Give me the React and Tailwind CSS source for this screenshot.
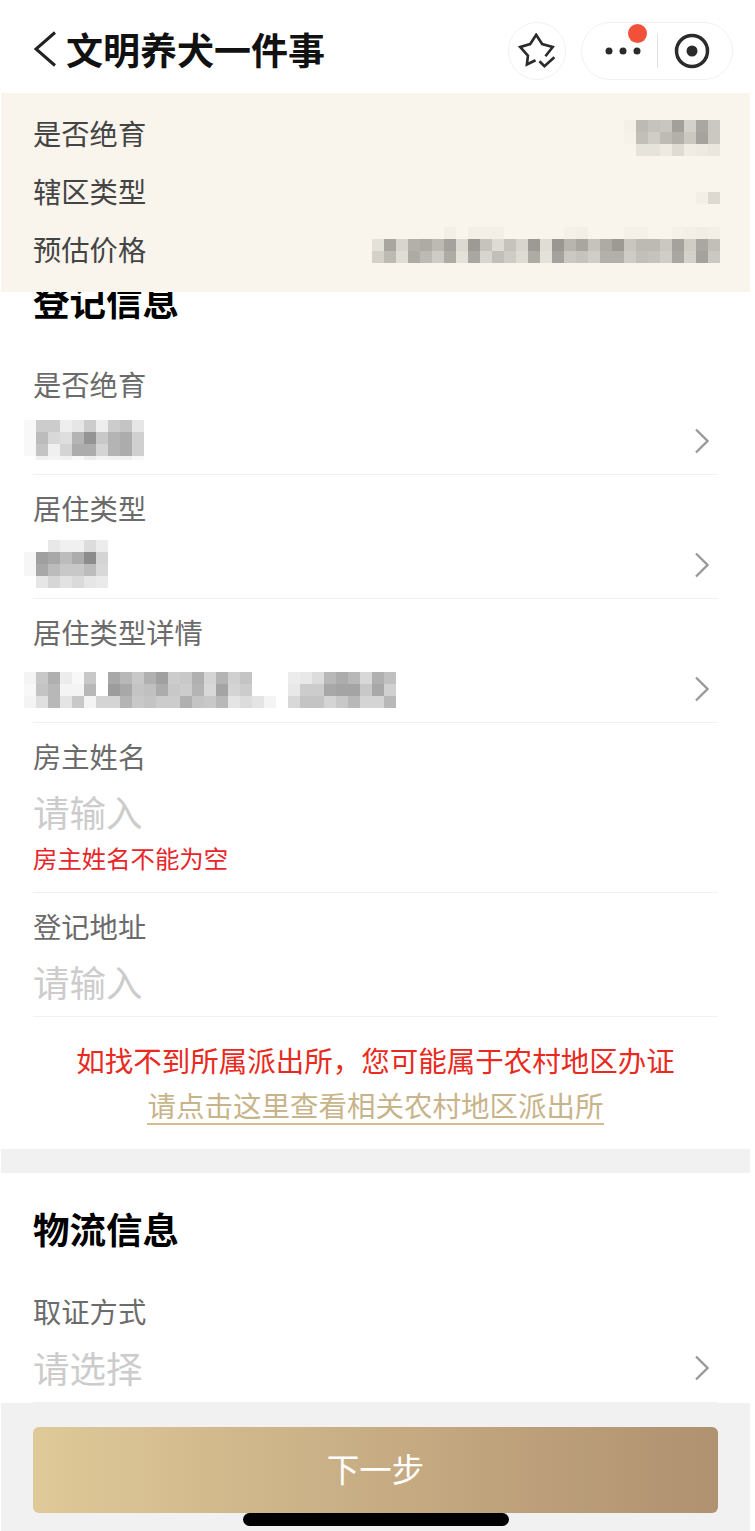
const MOSAIC_SMALL = [
  ['f4f0e8', 'bdbab4', 'c6c3bc', 'c9c6bf', 'a3a09b', 'd4d1ca', 'aaa7a2', 'cbc8c2'],
  ['f6f2ea', 'c2bfb9', 'd0cdc6', 'bebbb5', 'b3b0aa', 'cbc8c1', 'a6a39e', 'cbc8c1'],
  [null, 'e6e3db', 'e6e3db', 'eeeae2', 'dedbd3', 'f0ece4', 'eeeae2', 'eae6de'],
];
const MOSAIC_DISTRICT = [[null, 'f3efe7', 'dcd9d2']];
const MOSAIC_PRICE = [
  [null, null, null, null, null, null, 'f3efe7', null, 'f3efe7', 'f3efe7', 'f3efe7', null, null, null, null, null, 'f5f1e9', 'f3efe7', null, null, null, 'f5f1e9', 'f5f1e9', null, null, 'f5f1e9', 'f3efe7', 'f1ede5', 'f3efe7'],
  ['e4e1d9', 'a9a6a1', 'd8d5ce', 'b3b0aa', 'aeaba5', 'bdbab4', 'a5a29d', 'dcd9d2', '9d9a95', 'c6c3bc', 'dedbd3', 'c6c3bc', 'd8d5ce', '9d9a95', 'e0ddd5', '9a9792', 'b8b5af', 'a9a6a1', 'c6c3bc', 'aeaba5', '9d9a95', 'c9c6bf', 'bdbab4', 'bdbab4', 'cbc8c2', 'a5a29d', 'd0cdc6', 'aaa7a2', 'c2bfb9'],
  ['d4d1ca', 'bdbab4', 'e0ddd5', 'aeaba5', 'bdbab4', 'cfccc5', 'aeaba5', 'e4e1d9', 'aaa7a2', 'd8d5ce', 'c2bfb9', 'cfccc5', 'dedbd3', 'aeaba5', 'e4e1d9', 'a5a29d', 'cbc8c2', 'c6c3bc', 'd0cdc6', 'b3b0aa', 'b3b0aa', 'cfccc5', 'c2bfb9', 'c6c3bc', 'd0cdc6', 'aaa7a2', 'd4d1ca', 'a5a29d', 'cbc8c2'],
];
const MOSAIC_STERILE = [
  ['f8f8f8', 'cccccc', 'cccccc', 'eeeeee', 'e6e6e6', 'cccccc', 'eeeeee', 'cccccc', 'c4c4c4', 'e6e6e6'],
  ['f8f8f8', 'bcbcbc', 'd8d8d8', 'dedede', 'b4b4b4', '949494', 'c8c8c8', 'b4b4b4', 'acacac', 'd0d0d0'],
  ['f8f8f8', 'c4c4c4', 'f0f0f0', 'd4d4d4', 'acacac', 'acacac', 'd4d4d4', 'b4b4b4', 'acacac', 'd0d0d0'],
  [null, 'f0f0f0', 'f4f4f4', 'f0f0f0', 'f8f8f8', 'ececec', 'f4f4f4', 'f0f0f0', 'f0f0f0', 'f8f8f8'],
];
const MOSAIC_HOUSING = [
  [null, null, 'e8e8e8', 'f0f0f0', 'f0f0f0', 'dcdcdc', 'ececec'],
  ['f6f6f6', 'a0a0a0', 'a8a8a8', 'bcbcbc', 'acacac', '8c8c8c', 'd4d4d4'],
  ['f6f6f6', 'a8a8a8', 'bcbcbc', 'c8c8c8', 'c8c8c8', 'bcbcbc', 'd8d8d8'],
  [null, 'e6e6e6', 'd6d6d6', 'e2e2e2', 'dadada', 'e6e6e6', 'eaeaea'],
];
const MOSAIC_DETAIL = [
  ['f4f4f4', 'c8c8c8', 'b0b0b0', 'ececec', 'f8f8f8', 'c8c8c8', null, 'a8a8a8', 'b8b8b8', 'c8c8c8', 'b0b0b0', 'a0a0a0', 'cccccc', 'c8c8c8', 'b0b0b0', 'd4d4d4', 'b4b4b4', 'd0d0d0', 'c4c4c4', null, null, null, 'ececec', 'e8e8e8', 'dcdcdc', 'b8b8b8', 'acacac', 'b8b8b8', 'd8d8d8', 'b0b0b0', 'c0c0c0'],
  ['f8f8f8', 'c4c4c4', 'b8b8b8', 'f4f4f4', 'f4f4f4', 'b8b8b8', null, '9c9c9c', 'a8a8a8', 'c4c4c4', 'c0c0c0', 'acacac', 'c8c8c8', 'cccccc', 'b4b4b4', 'd8d8d8', 'a4a4a4', 'd4d4d4', 'cccccc', null, null, null, 'e8e8e8', 'cccccc', 'cccccc', 'a8a8a8', 'a4a4a4', 'a4a4a4', 'c8c8c8', 'a8a8a8', 'd0d0d0'],
  ['f4f4f4', 'e0e0e0', 'b8b8b8', 'e4e4e4', 'c8c8c8', 'f4f4f4', 'd4d4d4', 'd4d4d4', 'b4b4b4', 'c8c8c8', 'c4c4c4', 'cccccc', 'cccccc', 'b0b0b0', 'c4c4c4', 'c8c8c8', 'b8b8b8', 'e4e4e4', 'dcdcdc', 'e4e4e4', 'f4f4f4', null, 'd8d8d8', 'c4c4c4', 'c4c4c4', 'd4d4d4', 'c8c8c8', 'b8b8b8', 'd4d4d4', 'd4d4d4', 'b8b8b8'],
];

// blurred-out values in the screenshot
function Mosaic({ rows, height, className = '' }) {
  const cols = rows[0].length;
  return (
    <svg width={cols * 12} height={height || rows.length * 12} className={`block shrink-0 ${className}`}>
      {rows.map((row, y) =>
        row.map((c, x) =>
          c ? <rect key={`${x}-${y}`} x={x * 12} y={y * 12} width="12" height="12" fill={`#${c}`} /> : null
        )
      )}
    </svg>
  );
}

function Chevron() {
  return (
    <svg width="14" height="26" viewBox="0 0 14 26" fill="none" className="shrink-0">
      <path d="M1 1.5 L12.5 13 L1 24.5" stroke="#9a9a9a" strokeWidth="2.4" />
    </svg>
  );
}

function Divider() {
  return <div className="h-px bg-[#f1f1f3]"></div>;
}

function SelectField({ label, children }) {
  return (
    <div className="ml-[33px] mr-[37px]">
      <div className="pt-[13px] text-[28.3px] leading-[40px] text-[#6b6b6b]">{label}</div>
      <div className="mb-[5px] mt-[9px] flex h-[56px] items-center justify-between pr-[9px]">
        {children}
        <Chevron />
      </div>
      <Divider />
    </div>
  );
}

function InputField({ label, error }) {
  return (
    <div className="ml-[33px] mr-[37px]">
      <div className="pt-[13px] text-[28.3px] leading-[40px] text-[#6b6b6b]">{label}</div>
      <div className="mt-[7px] text-[36.5px] leading-[58px] text-[#cccccc]">请输入</div>
      {error && <div className="text-[24.4px] leading-[34px] text-[#e8262a]">{error}</div>}
      <div className={error ? 'mt-[17px]' : 'mt-[5px]'}>
        <Divider />
      </div>
    </div>
  );
}

function Summary({ label, rows, className }) {
  return (
    <div className="flex h-[58px] items-center justify-between">
      <span className="text-[28.3px] leading-[40px] text-[#444444]">{label}</span>
      <Mosaic rows={rows} className={className} />
    </div>
  );
}

export default function App() {
  return (
    <div className="flex h-[1531px] flex-col overflow-hidden bg-white font-['Noto_Sans_CJK_SC',sans-serif]">
      <header className="relative z-10 flex h-[93px] shrink-0 items-center justify-between bg-white pl-[33px] pr-[22px] pt-[8px]">
        <div className="-mt-[4px] flex items-center">
          <svg width="24" height="36" viewBox="0 0 24 36" fill="none" className="mr-[9px]">
            <path d="M22 1.5 L3 18 L22 34.5" stroke="#222222" strokeWidth="3" />
          </svg>
          <h1 className="text-[37px] font-bold leading-[50px] text-[#111111]">文明养犬一件事</h1>
        </div>
        <div className="flex items-center gap-[15px]">
          <div className="flex h-[58px] w-[58px] items-center justify-center rounded-full border border-[#f1f1f1]">
            <svg width="38" height="35" viewBox="85 70 115 105" fill="none" stroke="#2b2b2b" strokeWidth="8">
              <path d="M168 140 L190 112 L158 103 L140 75 L122 103 L92 112 L115 138 L112 165 L138 152" />
              <path d="M150 155 L165 170 L195 143" />
            </svg>
          </div>
          <div className="relative flex h-[58px] w-[152px] items-center rounded-full border border-[#f1f1f1]">
            <div className="flex w-[75px] justify-center pl-[7px]">
              <svg width="36" height="8" viewBox="0 0 36 8" fill="#2b2b2b">
                <circle cx="4" cy="4" r="3.5" />
                <circle cx="18" cy="4" r="3.5" />
                <circle cx="32" cy="4" r="3.5" />
              </svg>
            </div>
            <div className="h-[34px] w-px bg-[#e2e2e2]"></div>
            <div className="flex flex-1 justify-center pr-[7px]">
              <svg width="36" height="36" viewBox="0 0 36 36" fill="none">
                <circle cx="18" cy="18" r="15.5" stroke="#2b2b2b" strokeWidth="3.5" />
                <circle cx="18" cy="18" r="5.5" fill="#2b2b2b" />
              </svg>
            </div>
            <span className="absolute left-[46px] top-[1px] h-[19px] w-[19px] rounded-full bg-[#f05138]"></span>
          </div>
        </div>
      </header>

      <section className="relative z-10 ml-px h-[199px] w-[749px] shrink-0 bg-[#f9f5ed] pl-[32px] pr-[30px] pt-[11px]">
        <Summary label="是否绝育" rows={MOSAIC_SMALL} className="mt-[10px]" />
        <Summary label="辖区类型" rows={MOSAIC_DISTRICT} className="mt-[14px]" />
        <Summary label="预估价格" rows={MOSAIC_PRICE} className="mt-[-8px]" />
      </section>

      <main className="-mt-[16px] flex-1 overflow-hidden">
        <h2 className="mx-[33px] mb-[25px] text-[36.5px] font-bold leading-[50px] text-black">登记信息</h2>
        <SelectField label="是否绝育">
          <Mosaic rows={MOSAIC_STERILE} height={40} className="-ml-[9px] mt-[-2px]" />
        </SelectField>
        <SelectField label="居住类型">
          <Mosaic rows={MOSAIC_HOUSING} className="-ml-[9px] mt-[-2px]" />
        </SelectField>
        <SelectField label="居住类型详情">
          <Mosaic rows={MOSAIC_DETAIL} className="-ml-[9px] mt-[2px]" />
        </SelectField>
        <InputField label="房主姓名" error="房主姓名不能为空" />
        <InputField label="登记地址" />

        <div className="w-[751px] pb-[24px] pt-[20px] text-center text-[28.5px] leading-[46px]">
          <div className="text-[#e92a20]">如找不到所属派出所，您可能属于农村地区办证</div>
          <div className="-mt-px flex justify-center">
            <span className="h-[43px] border-b-2 border-[#d2bd8f] text-[#c8b48a]">请点击这里查看相关农村地区派出所</span>
          </div>
        </div>

        <div className="ml-px h-[24px] w-[749px] bg-[#f1f1f1]"></div>

        <h2 className="mx-[33px] mb-[24px] mt-[31px] text-[36.5px] font-bold leading-[50px] text-black">物流信息</h2>
        <div className="ml-[33px] mr-[37px]">
          <div className="pt-[13px] text-[28.3px] leading-[40px] text-[#6b6b6b]">取证方式</div>
          <div className="mb-[6px] mt-[9px] flex h-[56px] items-center justify-between pr-[9px]">
            <span className="text-[36.5px] leading-[50px] text-[#cccccc]">请选择</span>
            <Chevron />
          </div>
          <Divider />
        </div>
      </main>

      <footer className="relative ml-px h-[128px] w-[749px] shrink-0 bg-[#f1f1f1] pl-[32px] pr-[32px] pt-[24px]">
        <button className="flex h-[86px] w-full items-center justify-center rounded-[6px] bg-gradient-to-r from-[#dfc998] to-[#b09170] pb-[4px] text-[32.5px] text-white">
          下一步
        </button>
        <div className="absolute left-[242px] top-[110px] h-[13px] w-[266px] rounded-full bg-black"></div>
      </footer>
    </div>
  );
}
